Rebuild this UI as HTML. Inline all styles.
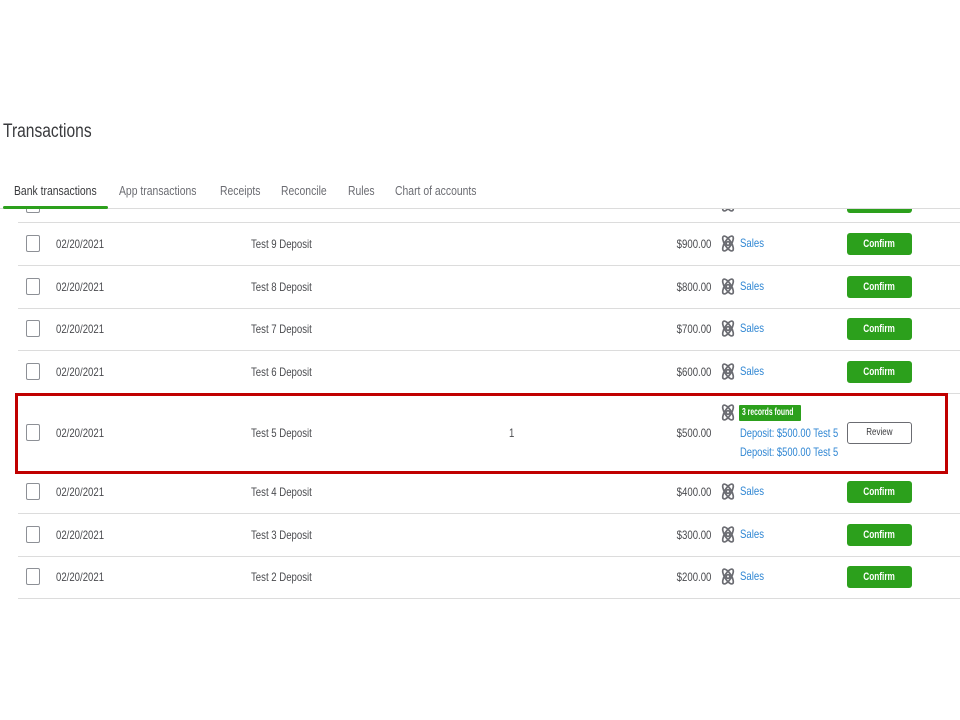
<!DOCTYPE html>
<html><head><style>
body{margin:0;width:960px;height:720px;background:#fff;position:relative;overflow:hidden;font-family:"Liberation Sans",sans-serif;color:#4a4b4f}
.a{position:absolute;white-space:nowrap}
.s{display:inline-block;transform:scaleX(.8);transform-origin:left center}
.t{font-size:12px;line-height:14px}
.line{position:absolute;left:18px;right:0;height:1px;background:#dcdcdc}
.cb{position:absolute;left:26px;width:12px;height:15px;border:1px solid #8d9096;border-radius:2px;background:#fff}
.btn{position:absolute;left:847px;width:65px;height:22px;background:#2ca01c;border-radius:3px;color:#fff;font-size:11px;line-height:22px;text-align:center;font-weight:bold}
.btn span{display:inline-block;transform:scaleX(.75)}
.amt{position:absolute;right:249px;font-size:12px;white-space:nowrap}
.amt span{display:inline-block;transform:scaleX(.8);transform-origin:right center}
.sales{color:#2f86d3;font-size:12px}
.ic{position:absolute;left:720px;width:16px;height:19px}
#clip{position:absolute;left:0;top:209px;width:960px;height:511px;overflow:hidden}
#rows{position:absolute;left:0;top:-209px;width:960px;height:720px}
.tab{font-size:13px;line-height:14px;top:184px}
</style></head><body>
<div class="a" style="left:3px;top:121px;font-size:19px;color:#393a3d"><span class="s" style="transform:scaleX(.82)">Transactions</span></div>
<div class="a tab" style="left:14px;color:#393a3d"><span class="s">Bank transactions</span></div>
<div class="a tab" style="left:119px;color:#6b6c72"><span class="s">App transactions</span></div>
<div class="a tab" style="left:220px;color:#6b6c72"><span class="s">Receipts</span></div>
<div class="a tab" style="left:281px;color:#6b6c72"><span class="s">Reconcile</span></div>
<div class="a tab" style="left:348px;color:#6b6c72"><span class="s">Rules</span></div>
<div class="a tab" style="left:395px;color:#6b6c72"><span class="s">Chart of accounts</span></div>
<div class="a" style="left:0;right:0;top:208px;height:1px;background:#dcdcdc"></div>
<div class="a" style="left:3px;top:206px;width:105px;height:3px;background:#2ca01c;border-radius:2px"></div>
<div id="clip"><div id="rows"></div></div>
<script>
var rows=[[244,9,"$900.00"],[287,8,"$800.00"],[329,7,"$700.00"],[372,6,"$600.00"],[492,4,"$400.00"],[535,3,"$300.00"],[577,2,"$200.00"]];
var h='';
var ic='<g fill="none" stroke="#6b6c72" stroke-width="1.7"><ellipse cx="8" cy="9.5" rx="3.3" ry="8.5" transform="rotate(32 8 9.5)"/><ellipse cx="8" cy="9.5" rx="3.3" ry="8.5" transform="rotate(-32 8 9.5)"/><circle cx="8" cy="9.5" r="1.8"/></g>';
h+='<div class="line" style="top:222px"></div>';
h+='<div class="cb" style="top:196px"></div>';
h+='<svg class="ic" style="top:194px" viewBox="0 0 16 19">'+ic+'</svg>';
h+='<div class="btn" style="top:191px"></div>';
rows.forEach(function(r){var c=r[0];
h+='<div class="line" style="top:'+(c+21)+'px"></div>';
h+='<div class="cb" style="top:'+(c-9)+'px"></div>';
h+='<div class="a t" style="left:56px;top:'+(c-7)+'px"><span class="s">02/20/2021</span></div>';
h+='<div class="a t" style="left:251px;top:'+(c-7)+'px"><span class="s">Test '+r[1]+' Deposit</span></div>';
h+='<div class="amt t" style="top:'+(c-7)+'px"><span>'+r[2]+'</span></div>';
h+='<svg class="ic" style="top:'+(c-10)+'px" viewBox="0 0 16 19">'+ic+'</svg>';
h+='<div class="a sales t" style="left:740px;top:'+(c-8)+'px"><span class="s">Sales</span></div>';
h+='<div class="btn" style="top:'+(c-11)+'px"><span>Confirm</span></div>';
});
var c=433;
h+='<div class="cb" style="top:'+(c-9)+'px"></div>';
h+='<div class="a t" style="left:56px;top:'+(c-7)+'px"><span class="s">02/20/2021</span></div>';
h+='<div class="a t" style="left:251px;top:'+(c-7)+'px"><span class="s">Test 5 Deposit</span></div>';
h+='<div class="a t" style="left:509px;top:'+(c-7)+'px"><span class="s">1</span></div>';
h+='<div class="amt t" style="top:'+(c-7)+'px"><span>$500.00</span></div>';
h+='<svg class="ic" style="top:403px" viewBox="0 0 16 19">'+ic+'</svg>';
h+='<div class="a" style="left:739px;top:405px;width:62px;height:16px;background:#2ca01c;color:#fff;font-size:10px;line-height:16px;border-radius:1px;font-weight:bold;overflow:hidden"><span style="display:inline-block;transform:scaleX(.68);transform-origin:left center;margin-left:3px">3 records found</span></div>';
h+='<div class="a sales t" style="left:740px;top:426px"><span class="s" style="transform:scaleX(.78)">Deposit: $500.00 Test 5</span></div>';
h+='<div class="a sales t" style="left:740px;top:445px"><span class="s" style="transform:scaleX(.78)">Deposit: $500.00 Test 5</span></div>';
h+='<div class="a" style="left:847px;top:422px;width:63px;height:20px;border:1px solid #6b6c72;border-radius:3px;font-size:10px;line-height:20px;text-align:center;color:#393a3d"><span style="display:inline-block;transform:scaleX(.8)">Review</span></div>';
h+='<div class="a" style="left:15px;top:393px;width:927px;height:75px;border:3px solid #c00000"></div>';
document.getElementById('rows').innerHTML=h;
</script>
</body></html>
